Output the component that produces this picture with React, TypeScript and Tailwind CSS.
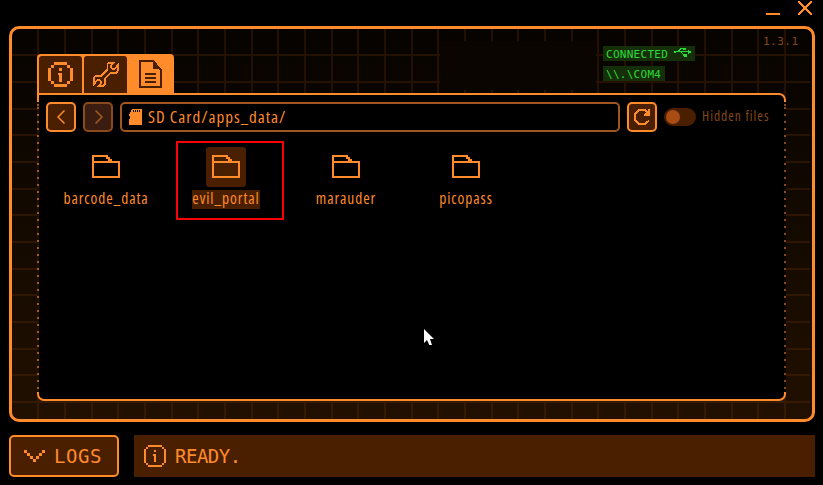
import React from "react";

const verticals = Array.from({ length: 29 }, (_, i) => Math.round(37.33 + i * 26.667) - 12);
const horizontals = Array.from({ length: 14 }, (_, i) => Math.round(54.33 + i * 26.667) - 29);

function Grid() {
  return (
    <svg className="absolute left-0 top-0" width="798" height="390" shapeRendering="crispEdges">
      <defs>
        <linearGradient id="line" x1="0" y1="0" x2="0" y2="390" gradientUnits="userSpaceOnUse">
          <stop offset="0" stopColor="#231002" />
          <stop offset="1" stopColor="#361a02" />
        </linearGradient>
      </defs>
      {verticals.map((x) => (
        <rect key={"v" + x} x={x} y="0" width="2" height="390" fill="url(#line)" />
      ))}
      {horizontals.map((y) => (
        <rect key={"h" + y} x="0" y={y} width="798" height="2" fill="url(#line)" />
      ))}
      <rect x="428" y="12" width="156" height="49" fill="#0a0500" />
    </svg>
  );
}

type IconProps = {
  box: string;
  w: number;
  h: number;
  children: React.ReactNode;
  className?: string;
  sw?: number;
  smooth?: boolean;
};
function Icon({ box, w, h, children, className = "", sw = 6, smooth }: IconProps) {
  return (
    <svg
      className={"block shrink-0 " + className}
      viewBox={box}
      width={w}
      height={h}
      fill="none"
      stroke="currentColor"
      strokeWidth={sw}
      shapeRendering={smooth ? "auto" : "crispEdges"}
    >
      {children}
    </svg>
  );
}

function Info({ size, heavy }: { size: number; heavy?: boolean }) {
  return heavy ? (
    <Icon box="0 0 75 75" w={size} h={size} sw={0}>
      <path
        fill="currentColor"
        d="M18 0H57V9H18ZM9 9H18V18H9ZM57 9H66V18H57ZM0 18H9V57H0ZM66 18H75V57H66ZM9 57H18V66H9ZM57 57H66V66H57ZM18 66H57V75H18ZM33 18H42V26H33ZM30 33H42V60H33V39H30Z"
      />
    </Icon>
  ) : (
    <Icon box="0 0 66 66" w={size} h={size} sw={0}>
      <path
        fill="currentColor"
        d="M12 0H54V6H12ZM6 6H12V12H6ZM54 6H60V12H54ZM0 12H6V54H0ZM60 12H66V54H60ZM6 54H12V60H6ZM54 54H60V60H54ZM12 60H54V66H12ZM30 15H36V21H30ZM27 27H36V51H30V33H27Z"
      />
    </Icon>
  );
}

function Folder() {
  return (
    <Icon box="0 0 84 69" w={28} h={23}>
      <path d="M3 3H45V9H51V15H57V21H81V66H3ZM3 21H57" />
    </Icon>
  );
}

const label = "block whitespace-nowrap font-['Open_Sans','Noto_Sans',sans-serif] [font-stretch:78%]";
const mono = "block whitespace-nowrap font-['DejaVu_Sans_Mono',monospace]";

function File({ name, selected }: { name: string; selected?: boolean }) {
  return (
    <div className="flex w-[120px] flex-col items-center">
      <div className={"flex h-10 w-10 items-start justify-center rounded-[3px] pt-2 " + (selected ? "bg-[#4a1f00]" : "")}>
        <Folder />
      </div>
      <div className={"mt-[3px] flex h-[19px] items-center justify-center " + (selected ? "w-[68px] bg-[#4a1f00]" : "")}>
        <span className={label + " -mt-[2px] text-[15.5px] leading-[19px] tracking-[0.92px]"}>{name}</span>
      </div>
    </div>
  );
}

export default function App() {
  return (
    <div className="relative h-[485px] w-[823px] overflow-hidden bg-black text-[#ff8b2b]">
      <div className="flex h-[26px] items-start justify-end pr-[11px] pt-px">
        <div className="mr-[18px] mt-3 h-[2px] w-[14px] bg-[#ff8b2b]" />
        <Icon box="0 0 14 14" w={14} h={14} sw={1.5}>
          <path d="M0 0L14 14M14 0L0 14" />
        </Icon>
      </div>

      <main className="relative ml-[9px] h-[396px] w-[806px] overflow-hidden rounded-[10px] border-[3px] border-[#ff8b2b] bg-[linear-gradient(#060300,#211000)]">
        <Grid />
        <div className="relative flex h-[64px] pl-[25px]">
          <nav className="mt-[25px] flex h-[39px] w-[137px] gap-[2px] rounded-t-[4px] bg-[#ff8b2b] pl-[2px] pt-[2px]">
            <div className="flex h-[37px] w-[43px] items-center justify-center rounded-t-[3px] bg-[#4a1f00]">
              <Info size={25} heavy />
            </div>
            <div className="flex h-[37px] w-[43px] items-center justify-center rounded-t-[3px] bg-[#4a1f00]">
              <Icon box="186 33 78 81" w={26} h={27} sw={5}>
                <path d="M248 38H234L229 43V59L210 78H194L189 84V102L198 92L204 88L210 94V100L202 108H216L221 103V87L240 68H256L261 62V44L252 56L246 58L240 52V46Z" />
              </Icon>
            </div>
            <div className="flex h-[37px] w-[43px] items-center justify-center pb-px text-[#4a1f00]">
              <Icon box="0 0 69 84" w={23} h={28}>
                <path d="M3 3H42L66 30V81H3ZM18 42H51M18 54H51M18 66H51" />
                <path d="M42 3V27H66Z" fill="currentColor" stroke="none" />
              </Icon>
            </div>
          </nav>
          <div className="ml-[429px] mt-[17px] flex w-[150px] flex-col items-start gap-[5px] text-[#2bdc35]">
            <div className="flex h-[15px] w-[92px] items-center bg-[#142f09] pl-[3px]">
              <span className={mono + " mt-px text-[11px] leading-[15px] tracking-[0.28px]"}>CONNECTED</span>
              <Icon box="0 0 51 30" w={17} h={10} sw={3} className="ml-[6px] -mt-[3px]">
                <path d="M0 14H48M12 14L21 5H30M21 14L30 25H34" />
                <path d="M0 12H6V18H0ZM28 2H36V9H28ZM31 20H40V29H31ZM43 9H46V12H51V17H46V20H43Z" fill="currentColor" stroke="none" />
              </Icon>
            </div>
            <div className="flex h-[15px] w-[62px] items-center bg-[#142f09] pl-[3px]">
              <span className={mono + " mt-px text-[11px] leading-[15px] tracking-[0.28px]"}>{"\\\\.\\COM4"}</span>
            </div>
          </div>
          <span className={mono + " ml-[10px] mt-[5px] text-[11px] leading-[15px] tracking-[0.5px] text-[#85481a]"}>1.3.1</span>
        </div>

        <section className="relative ml-[25px] h-[308px] w-[749px] rounded-[7px] rounded-tl-none border-2 border-[#ff8b2b] bg-black">
          <div className="absolute -left-[2px] top-[7px] h-[290px] w-[2px] bg-[#211004] bg-[repeating-linear-gradient(#a85b1c_0_2px,transparent_2px_7px)] bg-[position:0_5px]" />
          <div className="absolute -right-[2px] top-[7px] h-[290px] w-[2px] bg-[#080400] bg-[repeating-linear-gradient(#85481a_0_2px,transparent_2px_7px)] bg-[position:0_5px]" />
          <div className="flex items-center pl-[7px] pt-[7px]">
            <div className="flex h-[30px] w-[30px] items-center justify-center rounded-[5px] border-2 border-[#ff8b2b] bg-[#4a1f00]">
              <Icon box="0 0 8 14" w={8} h={14} sw={1.5} smooth className="-ml-px">
                <path d="M7.5 0.5L1 7L7.5 13.5" />
              </Icon>
            </div>
            <div className="ml-[7px] flex h-[30px] w-[30px] items-center justify-center rounded-[5px] border-2 border-[#8a4b1c] bg-[#3a1d10] text-[#a85b1c]">
              <Icon box="0 0 8 14" w={8} h={14} sw={1.5} smooth className="ml-px">
                <path d="M0.5 0.5L7 7L0.5 13.5" />
              </Icon>
            </div>
            <div className="ml-[7px] flex h-[30px] w-[500px] items-center rounded-[5px] border-2 border-[#a0561e] pl-[7px]">
              <Icon box="0 0 39 48" w={13} h={16} sw={0}>
                <path
                  fill="currentColor"
                  d="M9 0H39V48H0V30H3V21H0V15H3V9H6V3H9Z"
                />
                <path d="M12 3H15V9H12ZM18 3H21V9H18ZM24 3H27V9H24ZM30 3H33V9H30Z" fill="#000" />
              </Icon>
              <span className={label + " ml-[6px] -mt-px text-[17px] leading-[26px] tracking-[1px]"}>SD Card/apps_data/</span>
            </div>
            <div className="ml-[7px] flex h-[30px] w-[30px] items-center justify-center rounded-[5px] border-2 border-[#ff8b2b] bg-[#4a1f00]">
              <Icon box="129 327 48 48" w={16} h={16} sw={5}>
                <path d="M174 327V344H159M174 342L162 330H144L132 342V360L144 372H162L174 361" />
                <path d="M174 330V344H160Z" fill="currentColor" stroke="none" />
              </Icon>
            </div>
            <div className="ml-[7px] flex h-[18px] w-8 items-center rounded-full bg-[#4a1f00] pl-[2px]">
              <div className="h-[14px] w-[14px] rounded-full bg-[#a84c13]" />
            </div>
            <span className={label + " ml-[6px] -mt-[2px] text-[13.5px] leading-[18px] tracking-[1px] text-[#85481a]"}>Hidden files</span>
          </div>
          <div className="ml-[7px] mt-[15px] flex">
            <File name="barcode_data" />
            <File name="evil_portal" selected />
            <File name="marauder" />
            <File name="picopass" />
          </div>
        </section>
      </main>

      <footer className="mt-[13px] flex pl-[9px]">
        <div className="flex h-[42px] w-[110px] items-center rounded-[5px] border-2 border-[#ff8b2b] bg-[#4a1f00] pl-[13px]">
          <Icon box="0 0 63 36" w={21} h={12} sw={0}>
            <path
              fill="currentColor"
              d="M0 0H9V9H0ZM9 9H18V18H9ZM18 18H27V27H18ZM27 27H36V36H27ZM36 18H45V27H36ZM45 9H54V18H45ZM54 0H63V9H54Z"
            />
          </Icon>
          <span className={mono + " ml-[9px] text-[19px] leading-[38px] tracking-[0.6px]"}>LOGS</span>
        </div>
        <div className="ml-[15px] flex h-[42px] w-[681px] items-center bg-[#4a1f00] pl-[10px]">
          <Info size={22} />
          <span className={mono + " ml-[9px] text-[19px] leading-[42px] tracking-[-0.5px]"}>READY.</span>
        </div>
      </footer>

      <div className="absolute left-[176px] top-[141px] h-[79px] w-[108px] border-2 border-[#fb0007]" />
      <svg className="absolute left-[424px] top-[329px]" width="10" height="16" viewBox="0 0 30 48">
        <path d="M0 0V42L9 33L16 48H24L18 30H30Z" fill="#fff" />
      </svg>
    </div>
  );
}
